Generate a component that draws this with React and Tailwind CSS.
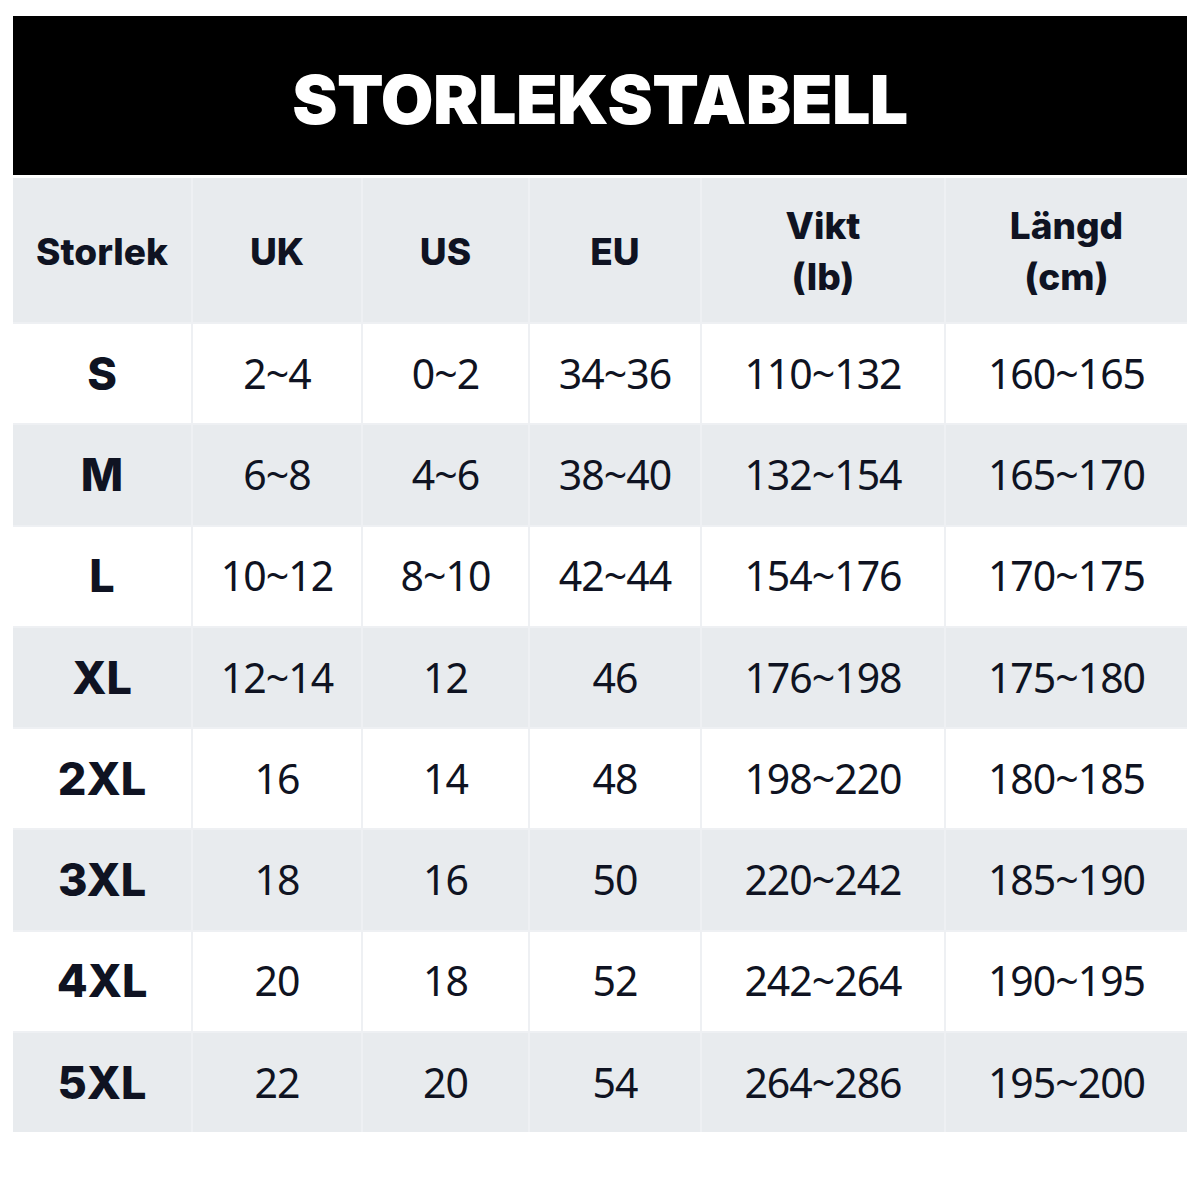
import React from "react";

const rows = [
  ["S", "2~4", "0~2", "34~36", "110~132", "160~165"],
  ["M", "6~8", "4~6", "38~40", "132~154", "165~170"],
  ["L", "10~12", "8~10", "42~44", "154~176", "170~175"],
  ["XL", "12~14", "12", "46", "176~198", "175~180"],
  ["2XL", "16", "14", "48", "198~220", "180~185"],
  ["3XL", "18", "16", "50", "220~242", "185~190"],
  ["4XL", "20", "18", "52", "242~264", "190~195"],
  ["5XL", "22", "20", "54", "264~286", "195~200"],
];

const heads = [["Storlek"], ["UK"], ["US"], ["EU"], ["Vikt", "(lb)"], ["Längd", "(cm)"]];

export default function App() {
  return (
    <div className="w-[1200px] h-[1200px] bg-white pt-[16px] px-[13px] font-['Inter',sans-serif] text-[#0f1322]">
      <div className="h-[159px] bg-black flex items-center justify-center">
        <h1 className="text-white text-[68px] font-black tracking-[-0.5px] leading-none pt-[6px]">
          STORLEKSTABELL
        </h1>
      </div>
      <div className="mt-[3px] grid grid-cols-[178px_168px_165px_170px_242px_241px] gap-[2px] bg-[#eef0f3] w-[1174px]">
        {heads.map((h, i) => (
          <div
            key={i}
            className="h-[144px] bg-[#e8ebee] flex flex-col items-center justify-center font-extrabold text-[37px] leading-[51px] pt-[2px]"
          >
            {h.map((t) => (
              <span key={t}>{t}</span>
            ))}
          </div>
        ))}
        {rows.map((r, ri) =>
          r.map((c, ci) => (
            <div
              key={ri + "-" + ci}
              className={
                "h-[99.25px] flex items-center justify-center " +
                (ri % 2 === 0 ? "bg-white " : "bg-[#e8ebee] ") +
                (ci === 0
                  ? "font-extrabold text-[45px]"
                  : "font-['Noto_Sans',sans-serif] text-[41px] tracking-[-1px]")
              }
            >
              {c}
            </div>
          ))
        )}
      </div>
    </div>
  );
}
